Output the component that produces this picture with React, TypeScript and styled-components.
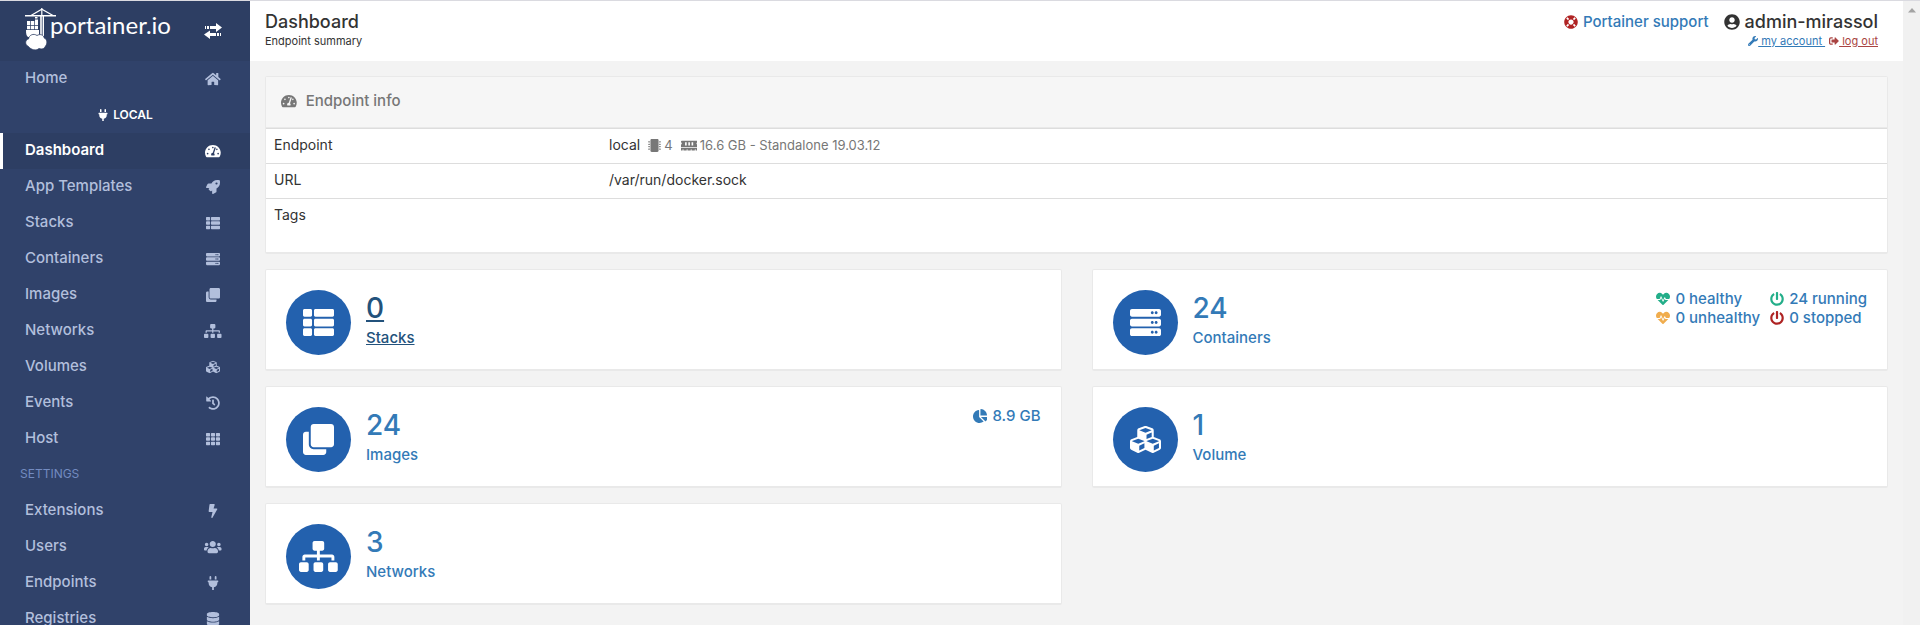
import React from 'react';
import styled, { createGlobalStyle, css } from 'styled-components';
import {
  FaHome, FaPlug, FaTachometerAlt, FaRocket, FaThList, FaServer, FaClone, FaSitemap, FaCubes,
  FaHistory, FaTh, FaBolt, FaUsers, FaDatabase, FaLifeRing, FaUserCircle, FaWrench, FaSignOutAlt,
  FaMicrochip, FaMemory, FaHeartbeat, FaPowerOff, FaChartPie,
} from 'react-icons/fa';
import type { IconType } from 'react-icons';

const Global = createGlobalStyle`
  * { box-sizing: border-box; }
  body {
    margin: 0;
    background: #f3f3f3;
    color: #333;
    font-family: Inter, "Open Sans", sans-serif;
    font-size: 14px;
    line-height: 20px;
  }
  a { color: #337ab7; text-decoration: none; }

  /* Wide icons keep the same height as the square ones. */
  svg { flex: none; }
  svg[viewBox="0 0 576 512"] { width: 1.125em; }
  svg[viewBox="0 0 544 512"] { width: 1.0625em; }
  svg[viewBox="0 0 640 512"] { width: 1.25em; }
`;

const Shell = styled.div`
  display: flex;
  height: 100vh;
  overflow: hidden;
  border-top: 1px solid #dadae0;
`;

const Sidebar = styled.aside`
  flex: 0 0 250px;
  overflow: hidden;
  background: #30426a;
`;

const Brand = styled.div`
  display: flex;
  align-items: center;
  justify-content: space-between;
  height: 60px;
  padding: 0 27px 0 25px;
  background: #2d3e63;
`;

const LogoLink = styled.a`
  display: flex;
  align-items: flex-start;
  height: 46px;
  color: #fff;
`;

const LogoText = styled.span`
  margin-left: -7px;
  padding-top: 3px;
  font-family: Lato, sans-serif;
  font-size: 24px;
  line-height: 28px;
`;

const ToggleButton = styled.button`
  display: flex;
  padding: 0;
  border: 0;
  background: none;
  color: #fff;
`;

const Menu = styled.ul`
  margin: 0;
  padding: 0;
  list-style: none;
`;

const MenuLink = styled.a<{ $active?: boolean }>`
  display: flex;
  align-items: center;
  justify-content: space-between;
  height: 36px;
  padding: 0 22px 2px 25px;
  color: #b2bfdc;
  font-size: 15px;
  font-weight: 500;
  ${(p) => p.$active && css`
    padding-left: 22px;
    border-left: 3px solid #fff;
    background: #2d3e63;
    color: #fff;
    font-weight: 600;
  `}
`;

const MenuIcon = styled.span`
  display: flex;
  justify-content: center;
  width: 30px;
  padding-top: 2px;
  font-size: 14px;
`;

const EndpointName = styled.li`
  display: flex;
  align-items: center;
  justify-content: center;
  gap: 4px;
  height: 36px;
  color: #fff;
  font-size: 12px;
  font-weight: 600;
`;

const MenuTitle = styled.li`
  height: 36px;
  padding-left: 20px;
  color: #738bc0;
  font-size: 12px;
  line-height: 34px;
`;

const Main = styled.main`
  flex: 1;
  min-width: 0;
`;

const Header = styled.header`
  display: flex;
  justify-content: space-between;
  height: 60px;
  padding: 11px 25px 0 15px;
  background: #fff;
`;

const Title = styled.h1`
  margin: 0;
  font-size: 18px;
  font-weight: 500;
  line-height: 20px;
`;

const Sub = styled.div`
  font-size: 11px;
  line-height: 18px;
`;

const HeaderRight = styled.div`
  text-align: right;
`;

const UserLine = styled.div`
  display: flex;
  align-items: center;
  gap: 15px;
  height: 20px;
`;

const Support = styled.a`
  display: flex;
  align-items: center;
  gap: 5px;
  font-size: 15px;
  font-weight: 500;
  svg { font-size: 14px; }
`;

const User = styled.span`
  display: flex;
  align-items: center;
  gap: 5px;
  font-size: 18px;
  font-weight: 500;
  svg { font-size: 16px; }
`;

const AccountLinks = styled.div`
  display: flex;
  justify-content: flex-end;
  gap: 4px;
  font-size: 11px;
  line-height: 18px;
`;

const AccountLink = styled.a<{ $danger?: boolean }>`
  display: flex;
  align-items: center;
  color: ${(p) => (p.$danger ? '#a94442' : '#337ab7')};
  svg { font-size: 10px; }
  span { text-decoration: underline; white-space: pre; }
`;

const Content = styled.div`
  display: grid;
  grid-template-columns: 1fr 1fr;
  gap: 15px 30px;
  padding: 15px;
`;

const Widget = styled.section`
  border: 1px solid #e9e9e9;
  border-bottom-width: 2px;
  border-radius: 2px;
  background: #fff;
`;

const InfoWidget = styled(Widget)`
  grid-column: 1 / -1;
`;

const WidgetTitle = styled.h2`
  display: flex;
  align-items: center;
  gap: 9px;
  height: 51px;
  margin: 0;
  padding: 0 15px 2px;
  border-bottom: 1px solid #e9e9e9;
  background: #f6f6f6;
  color: #777;
  font-size: 15px;
  font-weight: 500;
  svg { font-size: 14px; }
`;

const InfoTable = styled.table`
  width: 100%;
  border-collapse: collapse;
  table-layout: fixed;
  th, td {
    height: 35px;
    padding: 6px 8px 8px;
    border-top: 1px solid #ddd;
    font-weight: 400;
    text-align: left;
    vertical-align: top;
  }
  th { width: 335px; }
  tr:last-child > * { height: 53px; }
`;

const Detail = styled.div`
  display: flex;
  align-items: center;
  gap: 8px;
`;

const Specs = styled.span`
  display: flex;
  align-items: center;
  gap: 3px;
  color: #777;
  font-size: 13px;
`;

const Card = styled.a`
  display: flex;
  justify-content: space-between;
  height: 99px;
  padding: 20px;
`;

const CardMain = styled.div`
  display: flex;
  gap: 15px;
`;

const Disc = styled.span`
  display: flex;
  align-items: center;
  justify-content: center;
  width: 65px;
  height: 65px;
  border-radius: 50%;
  background: #2361ae;
  color: #fff;
  font-size: 31px;
`;

const CardText = styled.div<{ $hover?: boolean }>`
  padding-top: 3px;
  ${(p) => p.$hover && css`
    color: #23527c;
    text-decoration: underline;
  `}
`;

const Count = styled.div`
  font-size: 28px;
  font-weight: 500;
  line-height: 31px;
`;

const Label = styled.div`
  padding-top: 4px;
  font-size: 15px;
  font-weight: 500;
`;

const Stats = styled.div`
  display: grid;
  grid-auto-flow: column;
  grid-template-rows: 18px 20px;
  align-content: start;
  gap: 0 10px;
  font-size: 15px;
  font-weight: 500;
`;

const Stat = styled.div<{ $tone?: string }>`
  display: flex;
  align-items: center;
  gap: 5px;
  svg { font-size: 14px; color: ${(p) => p.$tone}; }
`;

const ScrollTrack = styled.div`
  display: flex;
  flex: 0 0 17px;
  justify-content: center;
  padding-top: 7px;
  background: #f1f1f1;
`;

function Crane() {
  return (
    <svg width="32" height="44" viewBox="0 0 32 44" fill="#fff" aria-hidden="true">
      <path d="M0 7h31v1.500H0zM16.200 0h1.200v8h-1.200zM15.200 8h1.600v20h-1.600zM17.600 8h1.400v20h-1.400z" />
      <path d="M6 7.500 16.800 1.200 28 7.500" fill="none" stroke="#fff" strokeWidth="1.200" />
      <path d="M2 13h3.300v4H2zM6 13h3.300v4H6zM10 9h2.500v1.500H10zM10 11.500h3v5.500h-3zM2 17.800h3.300v3.500H2zM6 17.800h3.300v3.500H6zM10 17.800h3v3.500h-3z" />
      <path d="M1 22h13v7H3C1.500 28 1 26 1 22z" />
      <path d="M3.500 38.500C-.5 37 0 31.500 3.500 31 4 27 8.500 25 12 27.500c3-2 7-.5 7.200 2.500 3 1 3.500 6 1.300 8-1 3-4 3.500-6.500 2.500-2.500 2.500-8 1.500-10.500-2z" stroke="#2d3e63" strokeWidth=".8" />
    </svg>
  );
}

function Transfer() {
  return (
    <svg width="19" height="16" viewBox="0 0 19 16" fill="currentColor" aria-hidden="true">
      <path d="M1 3h1v3H1zM3 3h2v3H3zM6 3h6V0l6 4.500L12 9V6H6zM17 10h-1v3h1zM15 10h-2v3h2zM12 10H6V7.500L0 11.500 6 16v-3h6z" />
    </svg>
  );
}

interface Item { name: string; icon: IconType; active?: boolean }

const mainItems: Item[] = [
  { name: 'Dashboard', icon: FaTachometerAlt, active: true },
  { name: 'App Templates', icon: FaRocket },
  { name: 'Stacks', icon: FaThList },
  { name: 'Containers', icon: FaServer },
  { name: 'Images', icon: FaClone },
  { name: 'Networks', icon: FaSitemap },
  { name: 'Volumes', icon: FaCubes },
  { name: 'Events', icon: FaHistory },
  { name: 'Host', icon: FaTh },
];

const settingsItems: Item[] = [
  { name: 'Extensions', icon: FaBolt },
  { name: 'Users', icon: FaUsers },
  { name: 'Endpoints', icon: FaPlug },
  { name: 'Registries', icon: FaDatabase },
];

function MenuItem({ name, icon: Icon, active }: Item) {
  return (
    <li>
      <MenuLink href="#" $active={active}>
        {name}
        <MenuIcon><Icon /></MenuIcon>
      </MenuLink>
    </li>
  );
}

interface TileProps { count: number; label: string; icon: IconType; hover?: boolean; children?: React.ReactNode }

function Tile({ count, label, icon: Icon, hover, children }: TileProps) {
  return (
    <Widget>
      <Card href="#">
        <CardMain>
          <Disc><Icon /></Disc>
          <CardText $hover={hover}>
            <Count>{count}</Count>
            <Label>{label}</Label>
          </CardText>
        </CardMain>
        {children}
      </Card>
    </Widget>
  );
}

export default function App() {
  return (
    <>
      <Global />
      <Shell>
        <Sidebar>
          <Brand>
            <LogoLink href="#"><Crane /><LogoText>portainer.io</LogoText></LogoLink>
            <ToggleButton type="button" aria-label="Toggle sidebar"><Transfer /></ToggleButton>
          </Brand>
          <Menu>
            <MenuItem name="Home" icon={FaHome} />
            <EndpointName><FaPlug />LOCAL</EndpointName>
            {mainItems.map((item) => <MenuItem key={item.name} {...item} />)}
            <MenuTitle>SETTINGS</MenuTitle>
            {settingsItems.map((item) => <MenuItem key={item.name} {...item} />)}
          </Menu>
        </Sidebar>
        <Main>
          <Header>
            <div>
              <Title>Dashboard</Title>
              <Sub>Endpoint summary</Sub>
            </div>
            <HeaderRight>
              <UserLine>
                <Support href="#"><FaLifeRing color="#b02323" />Portainer support</Support>
                <User><FaUserCircle />admin-mirassol</User>
              </UserLine>
              <AccountLinks>
                <AccountLink href="#"><FaWrench /><span> my account </span></AccountLink>
                <AccountLink href="#" $danger><FaSignOutAlt /><span> log out</span></AccountLink>
              </AccountLinks>
            </HeaderRight>
          </Header>
          <Content>
            <InfoWidget>
              <WidgetTitle><FaTachometerAlt />Endpoint info</WidgetTitle>
              <InfoTable>
                <tbody>
                  <tr>
                    <th scope="row">Endpoint</th>
                    <td>
                      <Detail>
                        local
                        <Specs><FaMicrochip />4</Specs>
                        <Specs><FaMemory />16.6 GB - Standalone 19.03.12</Specs>
                      </Detail>
                    </td>
                  </tr>
                  <tr><th scope="row">URL</th><td>/var/run/docker.sock</td></tr>
                  <tr><th scope="row">Tags</th><td /></tr>
                </tbody>
              </InfoTable>
            </InfoWidget>
            <Tile count={0} label="Stacks" icon={FaThList} hover />
            <Tile count={24} label="Containers" icon={FaServer}>
              <Stats>
                <Stat $tone="#23ae89"><FaHeartbeat />0 healthy</Stat>
                <Stat $tone="#f0ad4e"><FaHeartbeat />0 unhealthy</Stat>
                <Stat $tone="#23ae89"><FaPowerOff />24 running</Stat>
                <Stat $tone="#ae2323"><FaPowerOff />0 stopped</Stat>
              </Stats>
            </Tile>
            <Tile count={24} label="Images" icon={FaClone}>
              <Stats><Stat><FaChartPie />8.9 GB</Stat></Stats>
            </Tile>
            <Tile count={1} label="Volume" icon={FaCubes} />
            <Tile count={3} label="Networks" icon={FaSitemap} />
          </Content>
        </Main>
        <ScrollTrack aria-hidden="true">
          <svg width="8" height="5" viewBox="0 0 8 5"><path d="M4 0l4 4.500H0z" fill="#a3a3a3" /></svg>
        </ScrollTrack>
      </Shell>
    </>
  );
}
